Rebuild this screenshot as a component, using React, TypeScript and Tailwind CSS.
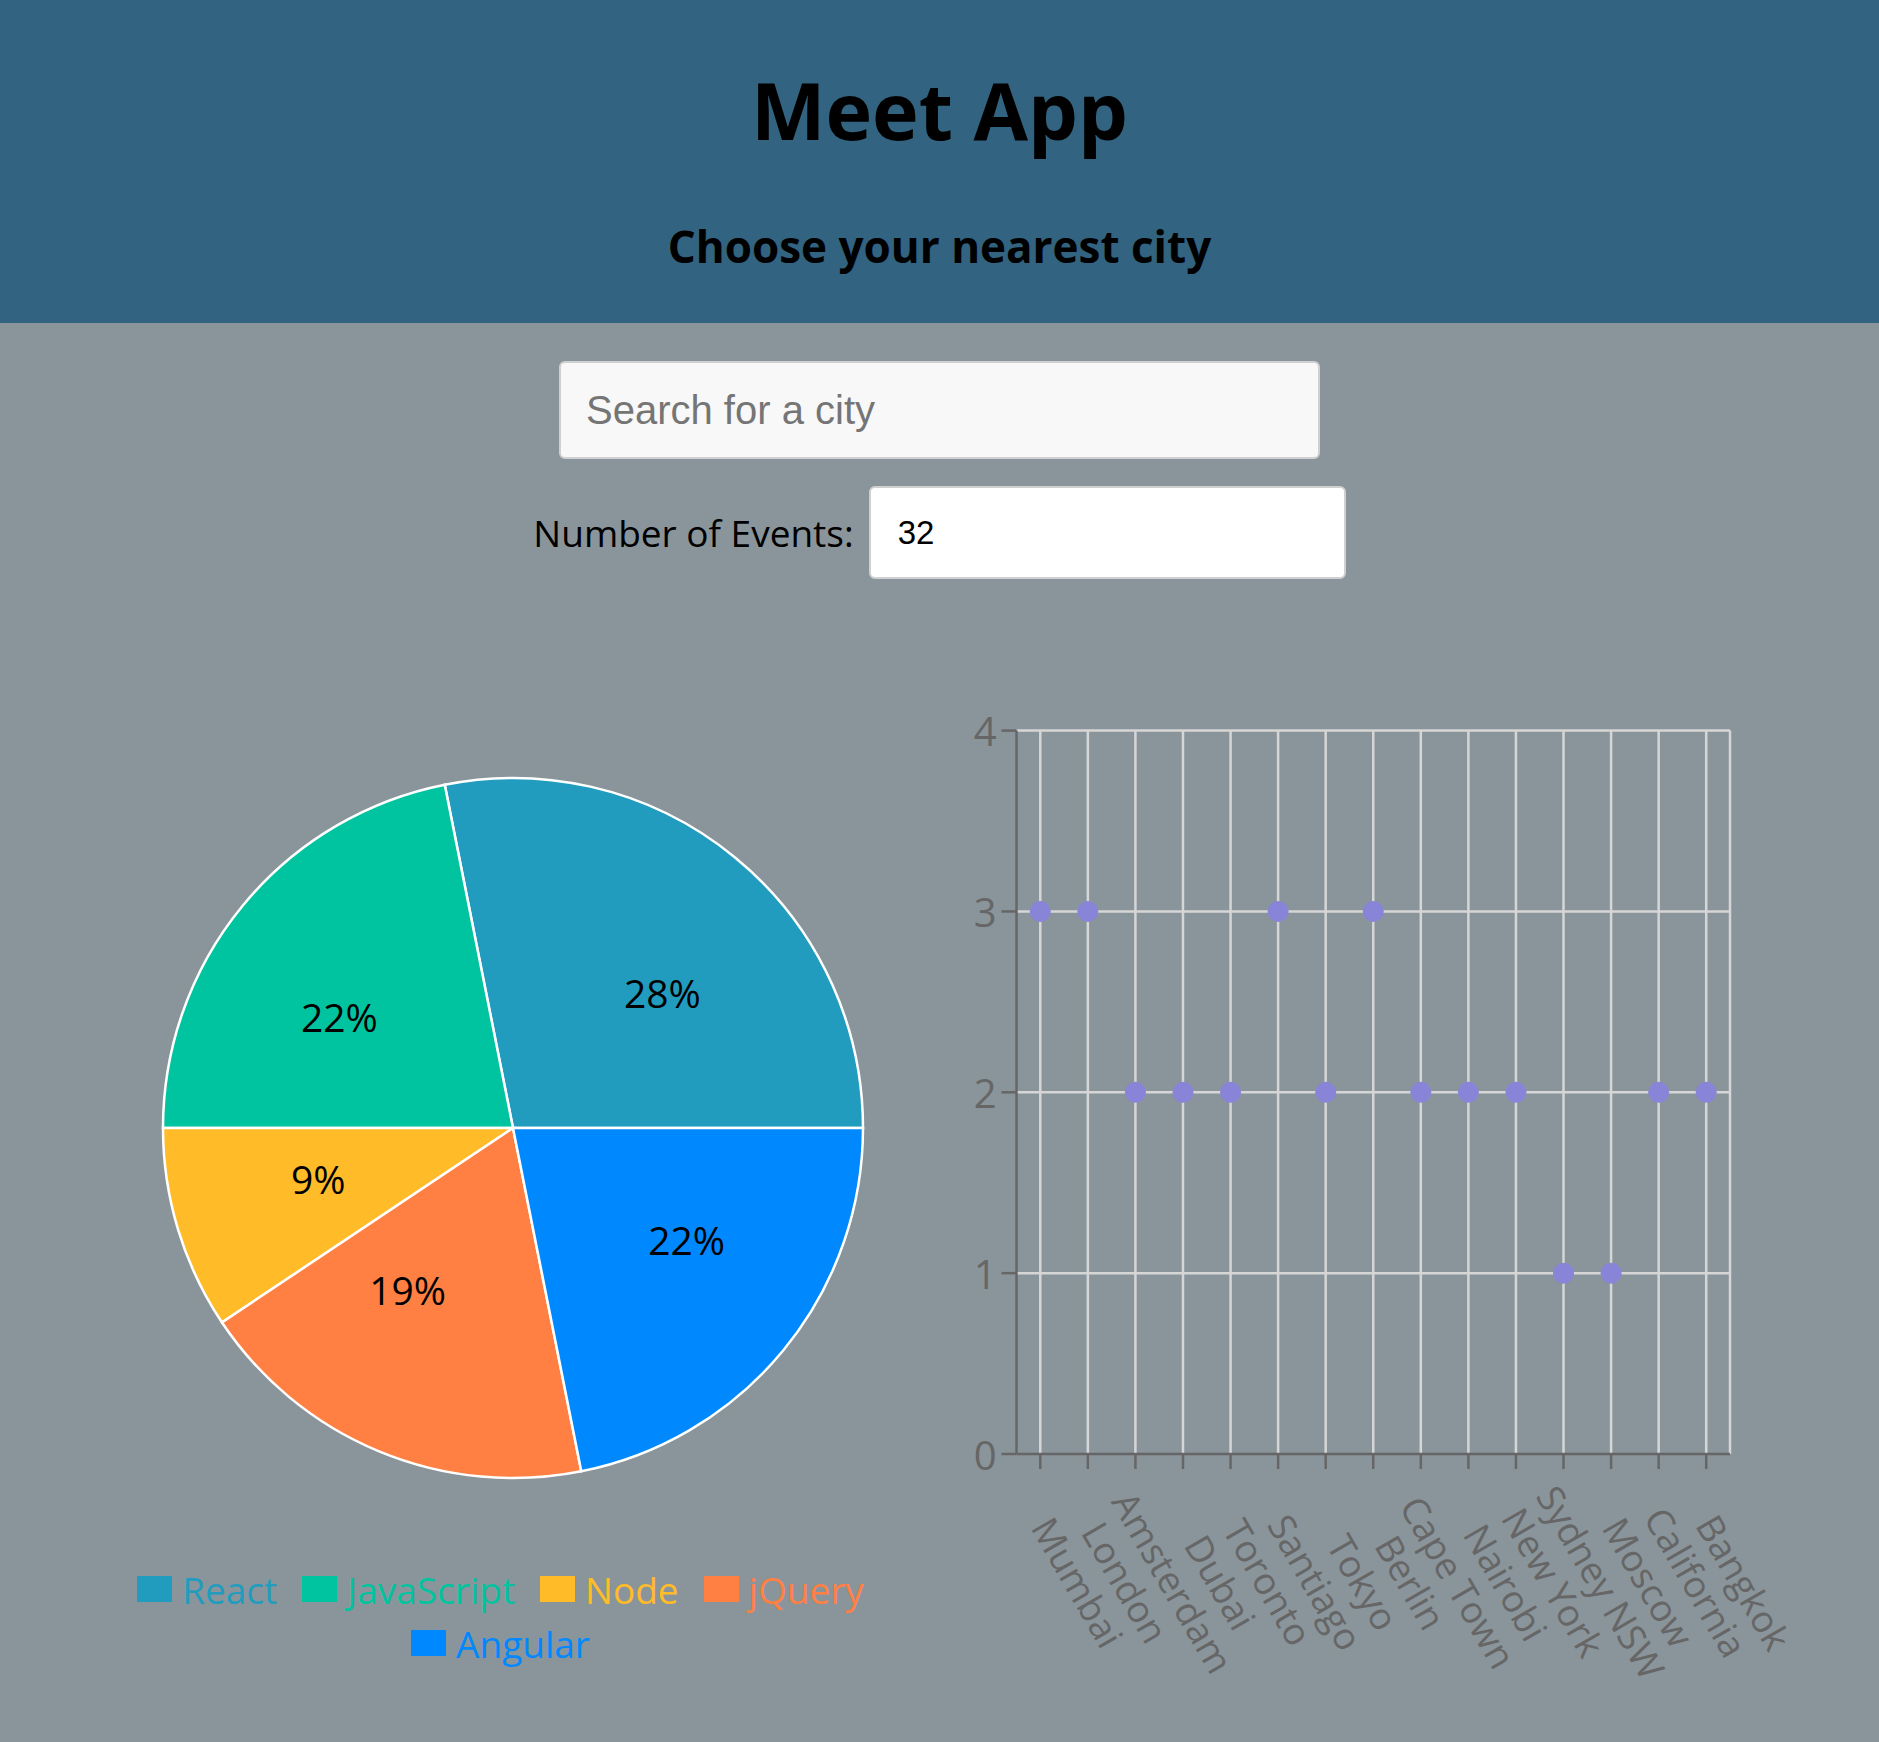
import React from 'react'

interface Genre {
  name: string
  value: number
  fill: string
  swatch: string
  text: string
}

// Counts behind the pie (32 events in total)
const genres: Genre[] = [
  { name: 'React', value: 9, fill: '#219cbe', swatch: 'bg-[#219cbe]', text: 'text-[#219cbe]' },
  { name: 'JavaScript', value: 7, fill: '#00c49f', swatch: 'bg-[#00c49f]', text: 'text-[#00c49f]' },
  { name: 'Node', value: 3, fill: '#ffbb28', swatch: 'bg-[#ffbb28]', text: 'text-[#ffbb28]' },
  { name: 'jQuery', value: 6, fill: '#ff8042', swatch: 'bg-[#ff8042]', text: 'text-[#ff8042]' },
  { name: 'Angular', value: 7, fill: '#0088fe', swatch: 'bg-[#0088fe]', text: 'text-[#0088fe]' },
]

const cities: { city: string; count: number }[] = [
  { city: 'Mumbai', count: 3 },
  { city: 'London', count: 3 },
  { city: 'Amsterdam', count: 2 },
  { city: 'Dubai', count: 2 },
  { city: 'Toronto', count: 2 },
  { city: 'Santiago', count: 3 },
  { city: 'Tokyo', count: 2 },
  { city: 'Berlin', count: 3 },
  { city: 'Cape Town', count: 2 },
  { city: 'Nairobi', count: 2 },
  { city: 'New York', count: 2 },
  { city: 'Sydney NSW', count: 1 },
  { city: 'Moscow', count: 1 },
  { city: 'California', count: 2 },
  { city: 'Bangkok', count: 2 },
]

function LegendItem({ item }: { item: Genre }) {
  return (
    <div className="mr-[25px] flex items-center">
      <span className={`h-[26px] w-[35px] ${item.swatch}`} />
      <span className={`ml-[10px] text-[37px] leading-none ${item.text}`}>{item.name}</span>
    </div>
  )
}

function EventGenresChart() {
  const cx = 450
  const cy = 508
  const r = 350
  const rad = Math.PI / 180
  const total = genres.reduce((sum, g) => sum + g.value, 0)

  let start = 0
  const slices = genres.map((g) => {
    const sweep = (g.value / total) * 360
    const a0 = start
    const a1 = start + sweep
    start = a1
    const x0 = cx + r * Math.cos(a0 * rad)
    const y0 = cy - r * Math.sin(a0 * rad)
    const x1 = cx + r * Math.cos(a1 * rad)
    const y1 = cy - r * Math.sin(a1 * rad)
    const large = sweep > 180 ? 1 : 0
    const mid = (a0 + sweep / 2) * rad
    const lx = cx + r * 0.5 * Math.cos(mid)
    const ly = cy - r * 0.5 * Math.sin(mid)
    return {
      ...g,
      d: `M${cx},${cy} L${x0},${y0} A${r},${r} 0 ${large} 0 ${x1},${y1} Z`,
      lx,
      ly,
      label: `${Math.round((g.value / total) * 100)}%`,
    }
  })

  return (
    <div className="flex w-[900px] flex-col">
      <svg width={900} height={942} className="block">
        {slices.map((s) => (
          <path key={s.name} d={s.d} fill={s.fill} stroke="#fff" strokeWidth={2.5} />
        ))}
        {slices.map((s) => (
          <text
            key={s.name + '-label'}
            x={s.lx}
            y={s.ly}
            fill="#000"
            fontSize={39}
            textAnchor={s.lx > cx ? 'start' : 'end'}
            dominantBaseline="central"
          >
            {s.label}
          </text>
        ))}
      </svg>
      {/* Legend */}
      <div className="flex h-[54px] items-center justify-center">
        {genres.slice(0, 4).map((g) => (
          <LegendItem key={g.name} item={g} />
        ))}
      </div>
      <div className="flex h-[54px] items-center justify-center">
        <LegendItem item={genres[4]} />
      </div>
    </div>
  )
}

function CityEventsChart() {
  const left = 53.5
  const right = 767
  const top = 110.6
  const bottom = 834
  const band = (right - left) / cities.length
  const yOf = (v: number) => bottom - (v * (bottom - top)) / 4
  const xOf = (i: number) => left + (i + 0.5) * band

  return (
    <svg width={880} height={1100} className="block overflow-visible">
      {/* grid */}
      {[1, 2, 3, 4].map((v) => (
        <line key={'h' + v} x1={left} x2={right} y1={yOf(v)} y2={yOf(v)} stroke="#d6d6d6" strokeWidth={2.5} />
      ))}
      {cities.map((c, i) => (
        <line key={'v' + c.city} x1={xOf(i)} x2={xOf(i)} y1={top} y2={bottom} stroke="#d6d6d6" strokeWidth={2.5} />
      ))}
      <line x1={right} x2={right} y1={top} y2={bottom} stroke="#d6d6d6" strokeWidth={2.5} />

      {/* y axis */}
      <line x1={left} x2={left} y1={top} y2={bottom} stroke="#666" strokeWidth={2.5} />
      {[0, 1, 2, 3, 4].map((v) => (
        <g key={'yt' + v}>
          <line x1={left - 15} x2={left} y1={yOf(v)} y2={yOf(v)} stroke="#666" strokeWidth={2.5} />
          <text x={left - 20} y={yOf(v)} fill="#666" fontSize={40} textAnchor="end" dominantBaseline="central">
            {v}
          </text>
        </g>
      ))}

      {/* x axis */}
      <line x1={left} x2={right} y1={bottom} y2={bottom} stroke="#666" strokeWidth={2.5} />
      {cities.map((c, i) => {
        const tx = xOf(i) + 38
        const ty = 962
        return (
          <g key={'xt' + c.city}>
            <line x1={xOf(i)} x2={xOf(i)} y1={bottom} y2={bottom + 15} stroke="#666" strokeWidth={2.5} />
            <text
              x={tx}
              y={ty}
              fill="#666"
              fontSize={37}
              textAnchor="middle"
              dominantBaseline="central"
              transform={`rotate(60, ${tx}, ${ty})`}
            >
              {c.city}
            </text>
          </g>
        )
      })}

      {/* points */}
      {cities.map((c, i) => (
        <circle key={'p' + c.city} cx={xOf(i)} cy={yOf(c.count)} r={10.5} fill="#8884d8" />
      ))}
    </svg>
  )
}

export default function App() {
  return (
    <div className="min-h-screen bg-[#8a959b] font-['Open_Sans',sans-serif] text-black">
      <header className="flex h-[323px] flex-col items-center bg-[#326380] pt-[70px]">
        <h1 className="text-[79px] font-bold leading-[79px]">Meet App</h1>
        <h3 className="mt-[75px] text-[44px] font-bold leading-[44px]">Choose your nearest city</h3>
      </header>

      <div className="flex flex-col items-center">
        <input
          type="text"
          placeholder="Search for a city"
          className="mt-[38px] h-[98px] w-[761px] rounded-[6px] border-2 border-[#d0d0d0] bg-[#f8f8f8] pl-[25px] font-['Liberation_Sans',Arial,sans-serif] text-[40px] outline-none placeholder:text-[#757575]"
        />
        <div className="mt-[27px] flex items-center gap-[15px]">
          <label className="text-[37px] leading-none">Number of Events:</label>
          <input
            type="text"
            defaultValue="32"
            className="h-[93px] w-[477px] rounded-[6px] border-2 border-[#d0d0d0] bg-white pl-[27px] font-['Liberation_Sans',Arial,sans-serif] text-[33px] text-black outline-none"
          />
        </div>
      </div>

      <div className="mt-[41px] flex pl-[63px]">
        <EventGenresChart />
        <CityEventsChart />
      </div>
    </div>
  )
}
